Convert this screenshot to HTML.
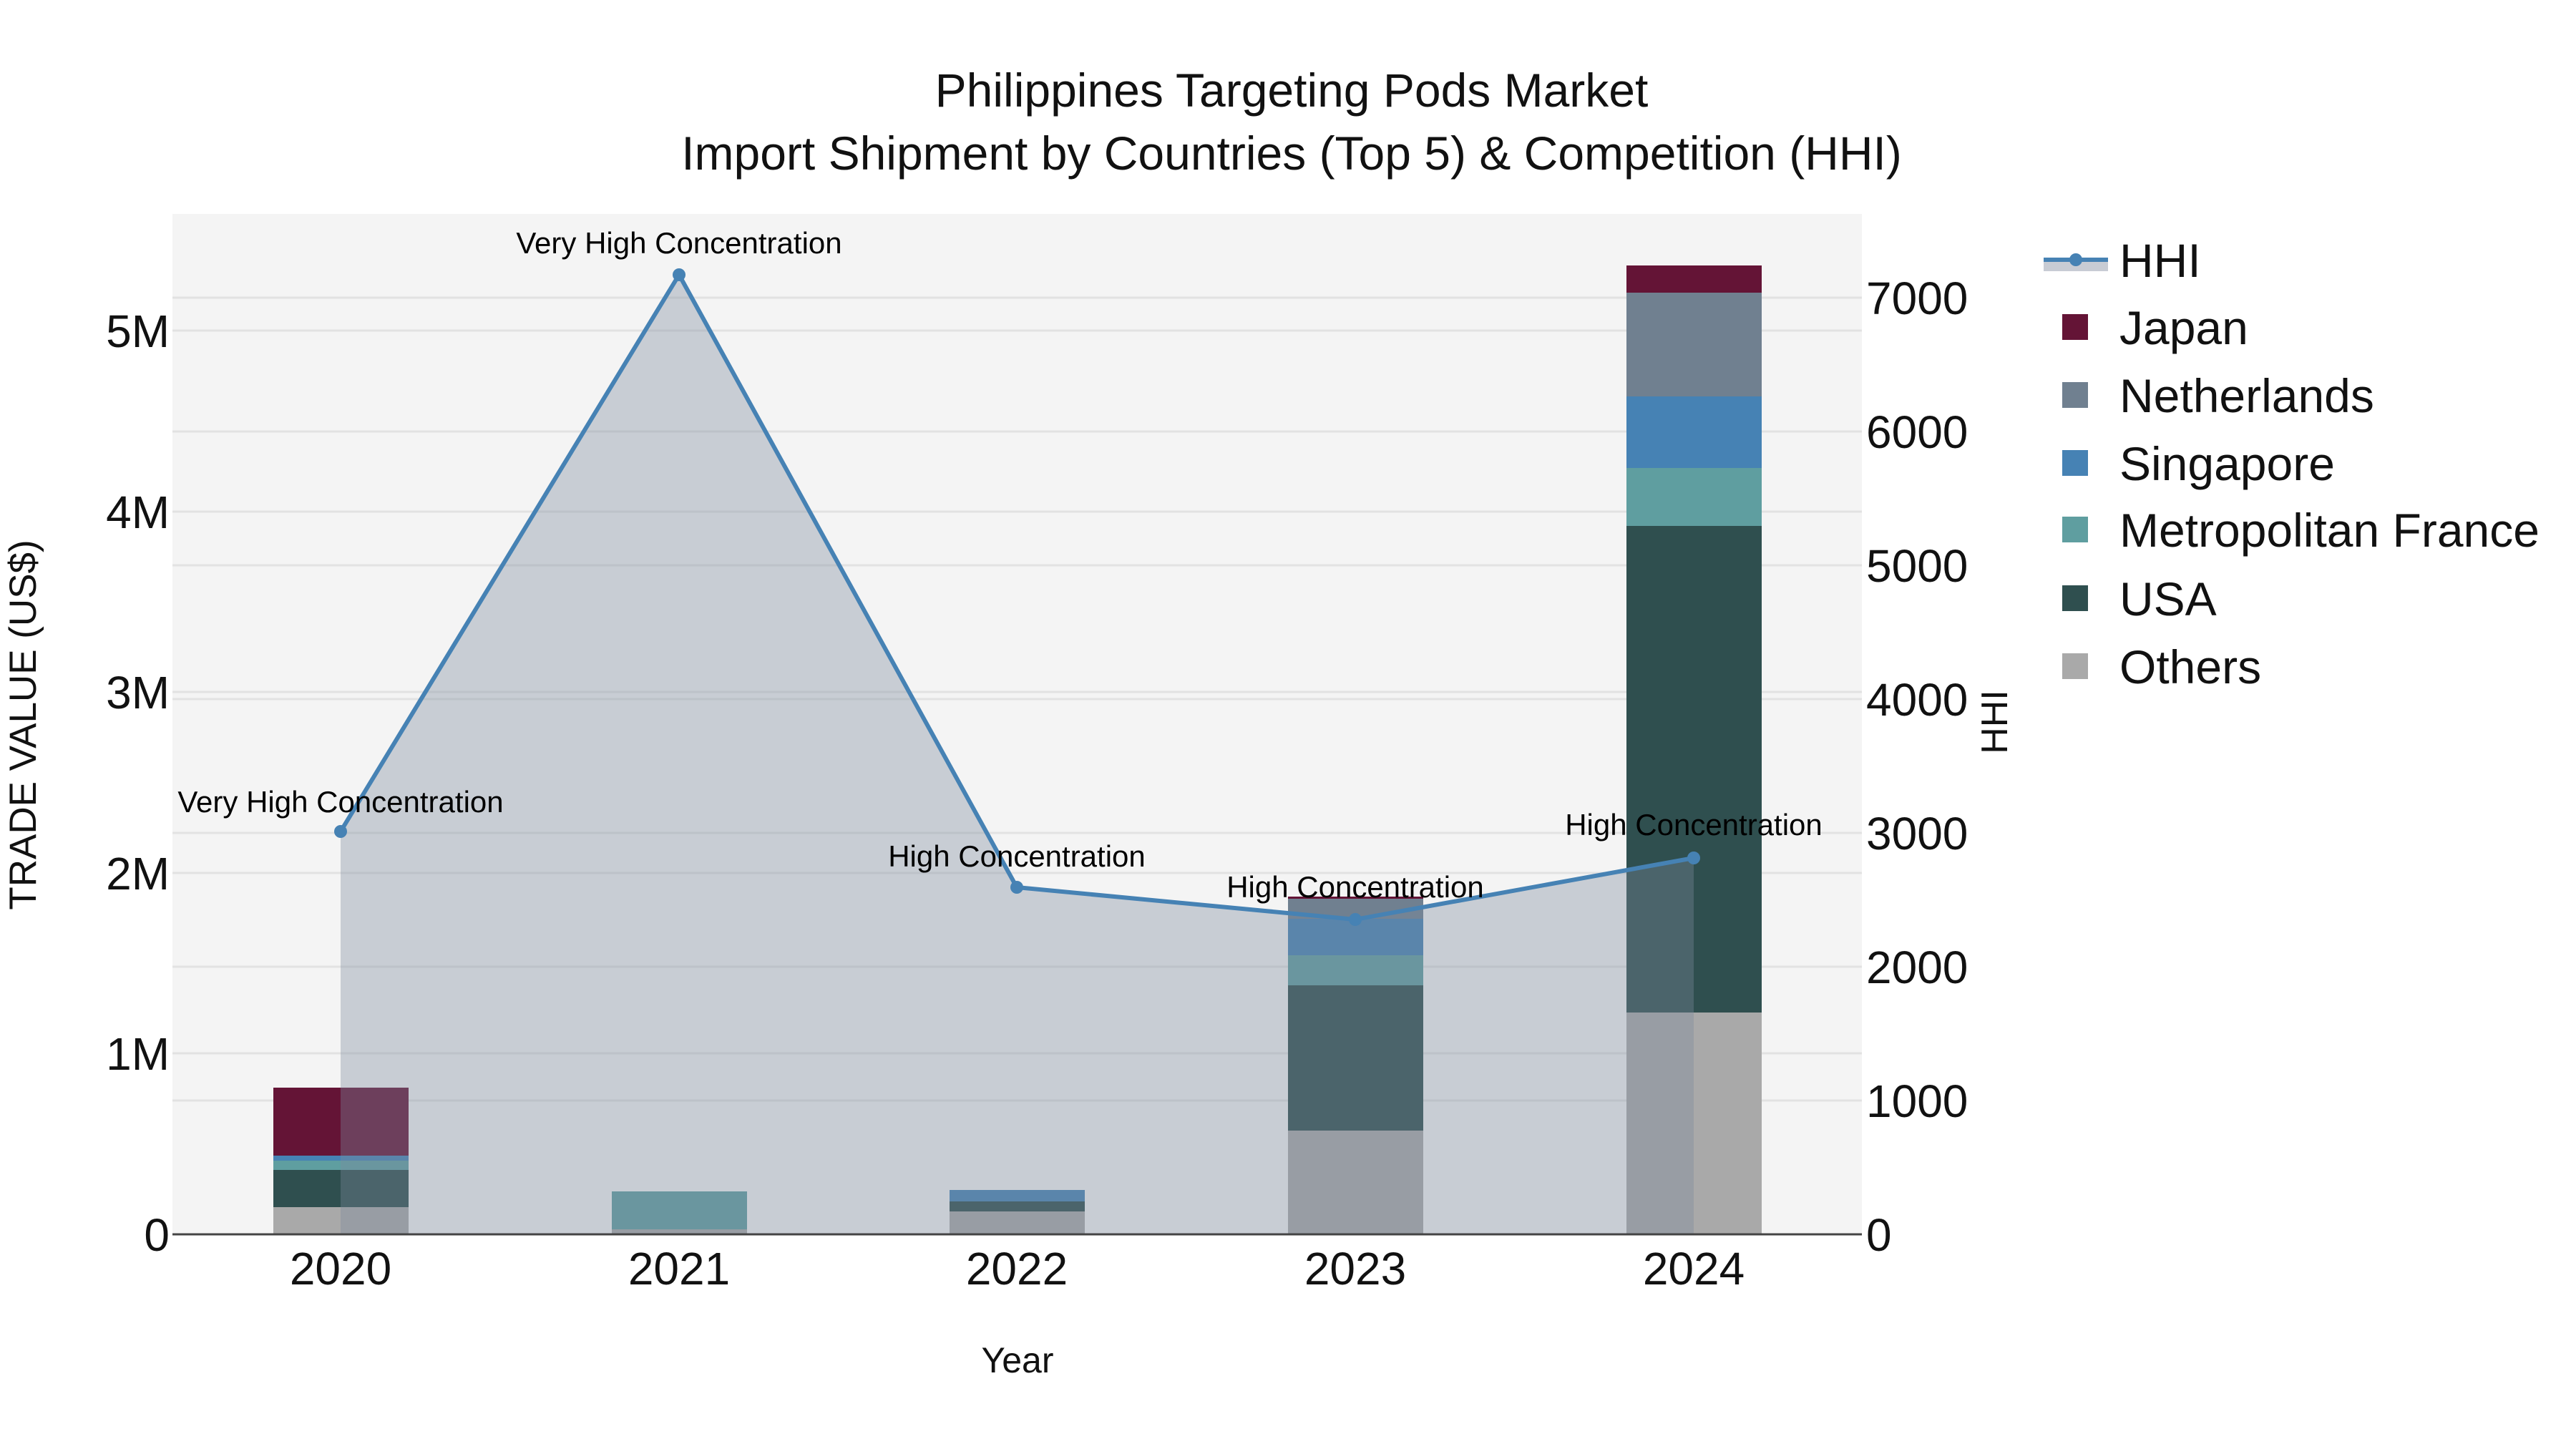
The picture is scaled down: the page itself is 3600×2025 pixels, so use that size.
<!DOCTYPE html>
<html><head><meta charset="utf-8"><style>
html,body{margin:0;padding:0;background:#fff;}
svg{display:block;font-family:"Liberation Sans",Arial,sans-serif;}
</style></head><body>
<svg width="3600" height="2025" viewBox="0 0 3600 2025" xmlns="http://www.w3.org/2000/svg">
<rect x="0" y="0" width="3600" height="2025" fill="#fff"/>
<rect x="241" y="299" width="2361" height="1426" fill="#f4f4f4"/>
<g stroke="#e2e2e2" stroke-width="3">
<line x1="241" x2="2602" y1="1472" y2="1472"/>
<line x1="241" x2="2602" y1="1220" y2="1220"/>
<line x1="241" x2="2602" y1="967" y2="967"/>
<line x1="241" x2="2602" y1="715" y2="715"/>
<line x1="241" x2="2602" y1="462" y2="462"/>
<line x1="241" x2="2602" y1="1538" y2="1538"/>
<line x1="241" x2="2602" y1="1351" y2="1351"/>
<line x1="241" x2="2602" y1="1164" y2="1164"/>
<line x1="241" x2="2602" y1="977" y2="977"/>
<line x1="241" x2="2602" y1="790" y2="790"/>
<line x1="241" x2="2602" y1="603" y2="603"/>
<line x1="241" x2="2602" y1="416" y2="416"/>
</g>
<g>
<rect x="382" y="1520" width="189" height="95" fill="#641436"/>
<rect x="382" y="1615" width="189" height="7" fill="#4682b4"/>
<rect x="382" y="1622" width="189" height="13" fill="#5f9ea0"/>
<rect x="382" y="1635" width="189" height="52" fill="#2f4f4f"/>
<rect x="382" y="1687" width="189" height="38" fill="#a9a9a9"/>
<rect x="855" y="1665" width="189" height="53" fill="#5f9ea0"/>
<rect x="855" y="1718" width="189" height="7" fill="#a9a9a9"/>
<rect x="1327" y="1663" width="189" height="16" fill="#4682b4"/>
<rect x="1327" y="1679" width="189" height="14" fill="#2f4f4f"/>
<rect x="1327" y="1693" width="189" height="32" fill="#a9a9a9"/>
<rect x="1800" y="1253" width="189" height="3" fill="#641436"/>
<rect x="1800" y="1256" width="189" height="28" fill="#708090"/>
<rect x="1800" y="1284" width="189" height="51" fill="#4682b4"/>
<rect x="1800" y="1335" width="189" height="42" fill="#5f9ea0"/>
<rect x="1800" y="1377" width="189" height="203" fill="#2f4f4f"/>
<rect x="1800" y="1580" width="189" height="145" fill="#a9a9a9"/>
<rect x="2273" y="371" width="189" height="38" fill="#641436"/>
<rect x="2273" y="409" width="189" height="145" fill="#708090"/>
<rect x="2273" y="554" width="189" height="100" fill="#4682b4"/>
<rect x="2273" y="654" width="189" height="81" fill="#5f9ea0"/>
<rect x="2273" y="735" width="189" height="680" fill="#2f4f4f"/>
<rect x="2273" y="1415" width="189" height="310" fill="#a9a9a9"/>
</g>
<polygon points="476,1162 949,384 1421,1240 1894,1285 2367,1199 2367,1725 476,1725" fill="rgb(126,137,158)" fill-opacity="0.37"/>
<polyline points="476,1162 949,384 1421,1240 1894,1285 2367,1199" fill="none" stroke="#4682b4" stroke-width="6" stroke-linejoin="round"/>
<g fill="#4682b4">
<circle cx="476" cy="1162" r="9"/><circle cx="949" cy="384" r="9"/><circle cx="1421" cy="1240" r="9"/><circle cx="1894" cy="1285" r="9"/><circle cx="2367" cy="1199" r="9"/>
</g>
<line x1="241" x2="2602" y1="1725" y2="1725" stroke="#444" stroke-width="3"/>
<g font-size="42" fill="#000" text-anchor="middle">
<text x="476" y="1135">Very High Concentration</text>
<text x="949" y="354">Very High Concentration</text>
<text x="1421" y="1211">High Concentration</text>
<text x="1894" y="1254">High Concentration</text>
<text x="2367" y="1167">High Concentration</text>
</g>
<g font-size="66" fill="#111" text-anchor="middle">
<text x="1805" y="149">Philippines Targeting Pods Market</text>
<text x="1805" y="237">Import Shipment by Countries (Top 5) &amp; Competition (HHI)</text>
</g>
<g font-size="64" fill="#111" text-anchor="end">
<text x="237" y="1748">0</text>
<text x="237" y="1495">1M</text>
<text x="237" y="1243">2M</text>
<text x="237" y="990">3M</text>
<text x="237" y="738">4M</text>
<text x="237" y="485">5M</text>
</g>
<g font-size="64" fill="#111" text-anchor="start">
<text x="2608" y="1748">0</text>
<text x="2608" y="1561">1000</text>
<text x="2608" y="1374">2000</text>
<text x="2608" y="1187">3000</text>
<text x="2608" y="1000">4000</text>
<text x="2608" y="813">5000</text>
<text x="2608" y="626">6000</text>
<text x="2608" y="439">7000</text>
</g>
<g font-size="64" fill="#111" text-anchor="middle">
<text x="476" y="1795">2020</text>
<text x="949" y="1795">2021</text>
<text x="1421" y="1795">2022</text>
<text x="1894" y="1795">2023</text>
<text x="2367" y="1795">2024</text>
</g>
<text x="1422" y="1918" font-size="50" fill="#111" text-anchor="middle">Year</text>
<text transform="translate(50,1013) rotate(-90)" font-size="53" fill="#111" text-anchor="middle">TRADE VALUE (US$)</text>
<text transform="translate(2805,1009) rotate(-90)" font-size="52" fill="#111" text-anchor="middle">HHI</text>
<rect x="2856" y="363" width="90" height="16" fill="#c8ccd4"/>
<line x1="2856" x2="2946" y1="363" y2="363" stroke="#4682b4" stroke-width="6"/>
<circle cx="2901" cy="363" r="9" fill="#4682b4"/>
<rect x="2882" y="439" width="36" height="36" fill="#641436"/>
<rect x="2882" y="534" width="36" height="36" fill="#708090"/>
<rect x="2882" y="629" width="36" height="36" fill="#4682b4"/>
<rect x="2882" y="722" width="36" height="36" fill="#5f9ea0"/>
<rect x="2882" y="818" width="36" height="36" fill="#2f4f4f"/>
<rect x="2882" y="913" width="36" height="36" fill="#a9a9a9"/>
<g font-size="66" fill="#111">
<text x="2962" y="387">HHI</text>
<text x="2962" y="481">Japan</text>
<text x="2962" y="576">Netherlands</text>
<text x="2962" y="671">Singapore</text>
<text x="2962" y="764">Metropolitan France</text>
<text x="2962" y="860">USA</text>
<text x="2962" y="955">Others</text>
</g>
</svg>
</body></html>
